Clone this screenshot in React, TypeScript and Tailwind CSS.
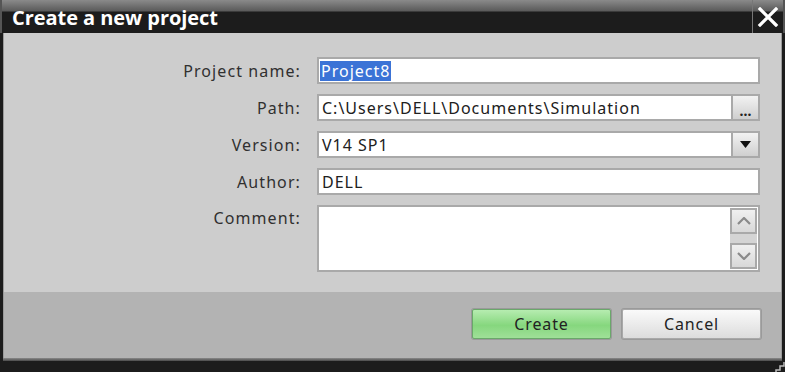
import React from "react";

const font = { fontFamily: '"Noto Sans", "Open Sans", sans-serif' };

function Row({ label, children, h = "h-[27px]", align = "items-center" }: { label: string; children: React.ReactNode; h?: string; align?: string }) {
  return (
    <div className={`flex ${align} ${h}`}>
      <div className={`w-[297px] text-right text-[16px] tracking-[1.1px] text-[#303030] whitespace-nowrap ${align === "items-start" ? "pt-[1px]" : ""}`}>{label}</div>
      <div className="ml-[16px] flex-1 h-full">{children}</div>
    </div>
  );
}

export default function App() {
  return (
    <div className="w-[785px] h-[372px] bg-[#1c1c1c] relative overflow-hidden" style={font}>
      {/* title bar */}
      <div className="h-[33px] flex bg-[linear-gradient(#8a8a8a_0px,#5a5a5a_11px,#1c1c1c_12px,#1c1c1c_100%)] border-x-[2px] border-[#555]">
        <div className="flex-1 pl-[10px] pt-[4px] leading-[28px] text-white font-bold text-[20px] tracking-[-0.05px]" style={{ fontFamily: '"Open Sans", sans-serif' }}>
          Create a new project
        </div>
        <div className="w-[31px] border-l border-[#777] flex items-center justify-center">
          <svg width="22" height="20" viewBox="0 0 22 20">
            <path d="M3 2 L19 18 M19 2 L3 18" stroke="white" strokeWidth="3.2" strokeLinecap="square" />
          </svg>
        </div>
      </div>
      {/* body */}
      <div className="mx-[3px] w-[779px] bg-[#cdcdcd] h-[259px] pt-[24px] pr-[21px] flex flex-col gap-[10px] border-x border-[#9a9a9a]">
        <Row label="Project name:">
          <div className="h-full bg-white border-2 border-[#a9a9a9] flex items-center pl-[1px] text-[16px] tracking-[1px]">
            <span className="bg-[#3b73d6] text-white px-[1px] leading-[20px]">Project8</span>
          </div>
        </Row>
        <Row label="Path:">
          <div className="h-full flex">
            <div className="flex-1 bg-white border-2 border-[#a9a9a9] flex items-center pl-[3px] text-[16px] tracking-[1px] text-[#202020] whitespace-nowrap">
              C:\Users\DELL\Documents\Simulation
            </div>
            <div className="w-[27px] border-2 border-l-0 border-[#a9a9a9] bg-[linear-gradient(#f2f2f2,#cfcfcf)] flex items-end justify-center pb-[3px]">
              <span className="text-[14px] leading-[10px] font-bold text-[#222]">...</span>
            </div>
          </div>
        </Row>
        <Row label="Version:">
          <div className="h-full flex">
            <div className="flex-1 bg-white border-2 border-[#a9a9a9] flex items-center pl-[3px] text-[16px] tracking-[1px] text-[#202020]">V14 SP1</div>
            <div className="w-[27px] border-2 border-l-0 border-[#a9a9a9] bg-[linear-gradient(#f2f2f2,#cfcfcf)] flex items-center justify-center">
              <svg width="11" height="7" viewBox="0 0 11 7"><path d="M0 0 H11 L5.5 7 Z" fill="#111" /></svg>
            </div>
          </div>
        </Row>
        <Row label="Author:">
          <div className="h-full bg-white border-2 border-[#a9a9a9] flex items-center pl-[3px] text-[16px] tracking-[1px] text-[#202020]">DELL</div>
        </Row>
        <Row label="Comment:" h="h-[67px]" align="items-start">
          <div className="h-full bg-white border-2 border-[#a9a9a9] flex justify-end pr-[1px] py-[1px]">
            <div className="w-[27px] flex flex-col justify-between bg-[#d4d4d4]">
              <div className="h-[26px] border-2 border-[#a9a9a9] bg-[linear-gradient(#f0f0f0,#d8d8d8)] flex items-center justify-center">
                <svg width="14" height="8" viewBox="0 0 14 8"><path d="M1 7 L7 1 L13 7" stroke="#8a8a8a" strokeWidth="2.2" fill="none" /></svg>
              </div>
              <div className="h-[26px] border-2 border-[#a9a9a9] bg-[linear-gradient(#f0f0f0,#d8d8d8)] flex items-center justify-center">
                <svg width="14" height="8" viewBox="0 0 14 8"><path d="M1 1 L7 7 L13 1" stroke="#8a8a8a" strokeWidth="2.2" fill="none" /></svg>
              </div>
            </div>
          </div>
        </Row>
      </div>
      {/* footer */}
      <div className="mx-[3px] w-[779px] h-[66px] bg-[#b3b3b3] border-x border-[#9a9a9a] flex justify-end items-start pt-[17px] pr-[20px] gap-[11px]">
        <button className="w-[139px] h-[30px] rounded-[2px] border border-[#6aa86a] bg-[linear-gradient(#b6ecb0,#86d77e_55%,#9fe098)] text-[16px] tracking-[0.9px] text-[#222] shadow-[0_0_0_1px_#9a9a9a]">
          Create
        </button>
        <button className="w-[139px] h-[30px] rounded-[2px] border border-[#a8a8a8] bg-[linear-gradient(#fafafa,#dcdcdc)] text-[16px] tracking-[0.9px] text-[#222] shadow-[0_0_0_1px_#9a9a9a]">
          Cancel
        </button>
      </div>
      <div className="mx-[3px] h-[3px] bg-[linear-gradient(#8a8a8a,#4a4a4a)]" />
      {/* resize grip */}
      <svg className="absolute right-0 bottom-0" width="12" height="10" viewBox="0 0 12 10">
        <path d="M11 0 V4 H7 V8 H3 V10" stroke="#bbb" strokeWidth="1.5" fill="none" />
      </svg>
    </div>
  );
}
